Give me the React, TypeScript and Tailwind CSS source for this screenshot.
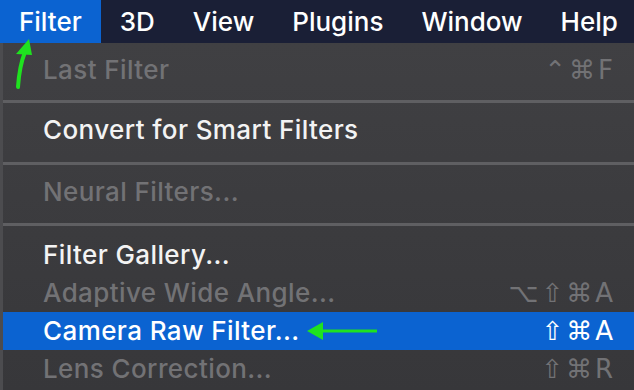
import React from "react";

const font = { fontFamily: "Inter, 'Noto Sans', 'DejaVu Sans', sans-serif" };

function Row({ label, shortcut, disabled, active }: { label: string; shortcut?: string; disabled?: boolean; active?: boolean }) {
  const color = active ? "text-white" : disabled ? "text-[#727275]" : "text-[#f3f3f3]";
  return (
    <div className={`h-[38px] flex items-center justify-between pl-[40px] pr-[21px] ${active ? "bg-[#0b63d1]" : ""} ${color}`}>
      <span className="text-[26px] font-medium leading-none tracking-[0.4px]">{label}</span>
      {shortcut && (
        <span className="flex items-center gap-[3px] text-[26px] leading-none" style={{ fontFamily: "'DejaVu Sans', Inter, sans-serif" }}>
          {shortcut.split("").map((c, i) => (
            <span key={i}>{c}</span>
          ))}
        </span>
      )}
    </div>
  );
}

export default function App() {
  return (
    <div className="relative w-[634px] h-[390px] overflow-hidden bg-[#3c3c3f]" style={font}>
      <div className="h-[43px] bg-[#1a1f36] flex items-center text-white text-[26px] font-medium">
        <div className="h-full flex items-center px-[19px] bg-[#0b63d1]">Filter</div>
        <div className="h-full flex items-center px-[19px]">3D</div>
        <div className="h-full flex items-center px-[19px]">View</div>
        <div className="h-full flex items-center px-[19px]">Plugins</div>
        <div className="h-full flex items-center px-[19px]">Window</div>
        <div className="h-full flex items-center px-[19px]">Help</div>
      </div>
      <div className="border-l-[3px] border-[#4c4c4f] pt-[8px] h-[347px] bg-gradient-to-b from-[#404043] to-[#37373a]">
        <Row label="Last Filter" shortcut="⌃⌘F" disabled />
        <div className="mt-[11px] mb-[8px] h-[3px] bg-[#5f5f62]" />
        <Row label="Convert for Smart Filters" />
        <div className="mt-[13px] mb-[8px] h-[3px] bg-[#5f5f62]" />
        <Row label="Neural Filters..." disabled />
        <div className="mt-[12px] mb-[10px] h-[3px] bg-[#5f5f62]" />
        <Row label="Filter Gallery..." />
        <Row label="Adaptive Wide Angle..." shortcut="⌥⇧⌘A" disabled />
        <Row label="Camera Raw Filter..." shortcut="⇧⌘A" active />
        <Row label="Lens Correction..." shortcut="⇧⌘R" disabled />
      </div>
      <svg className="absolute left-0 top-0 pointer-events-none" width="634" height="390">
        <path d="M18 87 C19 72 21 62 25 52" stroke="#1fe21f" strokeWidth="4" fill="none" strokeLinecap="round" />
        <polygon points="29,39 16,54 32,55" fill="#1fe21f" />
        <line x1="320" y1="331" x2="377" y2="331" stroke="#1fe21f" strokeWidth="3" />
        <polygon points="307,331 323,322 323,340" fill="#1fe21f" />
      </svg>
    </div>
  );
}
